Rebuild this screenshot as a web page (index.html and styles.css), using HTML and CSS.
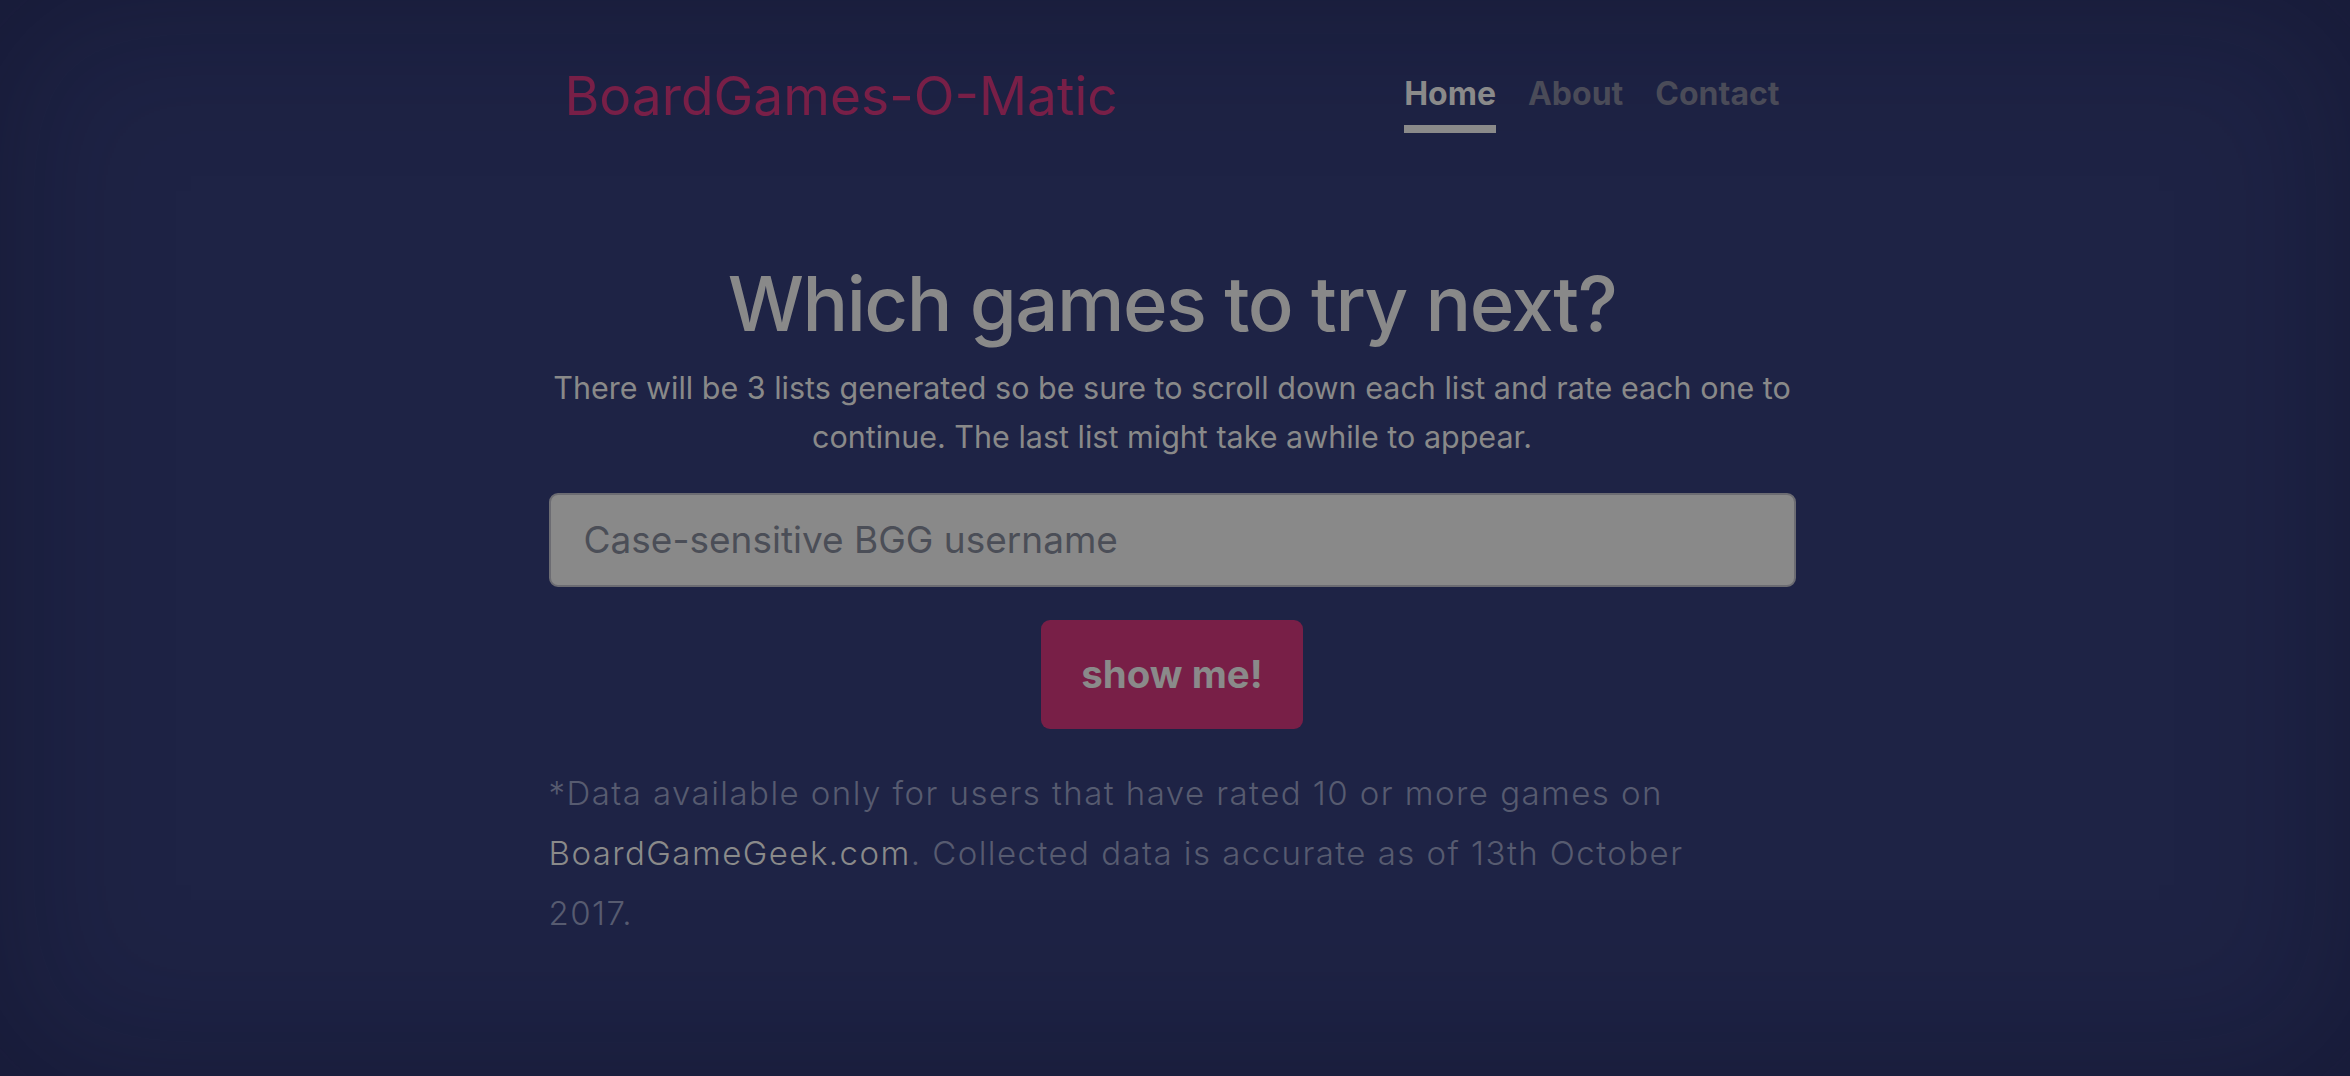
FILE: index.html
```html
<!DOCTYPE html>
<html lang="en">
<head>
<meta charset="utf-8">
<title>BoardGames-O-Matic</title>
<link rel="stylesheet" href="styles.css">
</head>
<body>
<div class="cover">
  <header class="masthead">
    <h3 class="brand">BoardGames-O-Matic</h3>
    <nav class="nav">
      <a class="nav-link active" href="#">Home</a>
      <a class="nav-link" href="#">About</a>
      <a class="nav-link" href="#">Contact</a>
    </nav>
  </header>
  <main class="inner">
    <h1 class="title">Which games to try next?</h1>
    <p class="lead">There will be 3 lists generated so be sure to scroll down each list and rate each one to continue. The last list might take awhile to appear.</p>
    <form class="form">
      <input class="field" type="text" placeholder="Case-sensitive BGG username">
      <button class="btn" type="button">show me!</button>
    </form>
    <p class="note">*Data available only for users that have rated 10 or more games on <a class="note-link" href="#">BoardGameGeek.com</a>. Collected data is accurate as of 13th October 2017.</p>
  </main>
</div>
</body>
</html>
```

FILE: styles.css
```css
html, body {
  margin: 0;
  padding: 0;
  height: 100%;
}
body {
  background: #1e2345;
  font-family: Inter, "Liberation Sans", sans-serif;
  color: #898989;
  box-shadow: inset 0 0 160px rgba(8, 10, 25, 0.35);
  padding-right: 6px;
  box-sizing: border-box;
}
.cover {
  width: 1247px;
  margin: 0 auto;
  display: flex;
  flex-direction: column;
}
.masthead {
  display: flex;
  justify-content: space-between;
  align-items: flex-start;
  padding: 63.5px 16px 0 16px;
}
.brand {
  margin: 0;
  font-size: 53.3px;
  line-height: 64.8px;
  font-weight: 400;
  color: #781f47;
}
.nav {
  display: flex;
  gap: 32px;
  margin-top: 7px;
}
.nav-link {
  font-size: 32px;
  line-height: 45px;
  font-weight: 700;
  color: #4a4b58;
  text-decoration: none;
  padding-bottom: 9px;
  border-bottom: 8px solid transparent;
}
.nav-link.active {
  color: #8a8a8a;
  border-bottom-color: #8a8a8a;
}
.inner {
  display: flex;
  flex-direction: column;
  align-items: stretch;
  text-align: center;
  margin-top: 124.5px;
}
.title {
  margin: 0;
  font-size: 76px;
  line-height: 93.6px;
  font-weight: 500;
  letter-spacing: -1.5px;
  color: #898989;
}
.lead {
  margin: 12px 0 0;
  font-size: 30.5px;
  line-height: 49px;
  font-weight: 400;
  color: #898989;
}
.form {
  display: flex;
  flex-direction: column;
  align-items: center;
  margin-top: 32px;
}
.field {
  width: 100%;
  height: 94px;
  box-sizing: border-box;
  background: #898989;
  border: 2px solid #6c6c72;
  border-radius: 9px;
  padding: 0 33px;
  font-family: Inter, "Liberation Sans", sans-serif;
  font-size: 37px;
  color: #4b4e57;
}
.field::placeholder {
  color: #4b4e57;
}
.btn {
  margin-top: 33px;
  width: 262px;
  height: 109px;
  border: 0;
  border-radius: 9px;
  background: #781f47;
  color: #8a8a8a;
  font-family: Inter, "Liberation Sans", sans-serif;
  font-size: 38.5px;
  font-weight: 700;
}
.note {
  margin: 34px 0 0;
  padding-right: 60px;
  text-align: left;
  font-size: 33px;
  line-height: 60px;
  font-weight: 300;
  letter-spacing: 1.45px;
  color: #575b70;
}
.note-link {
  color: #8a8a8a;
  text-decoration: none;
}
```
